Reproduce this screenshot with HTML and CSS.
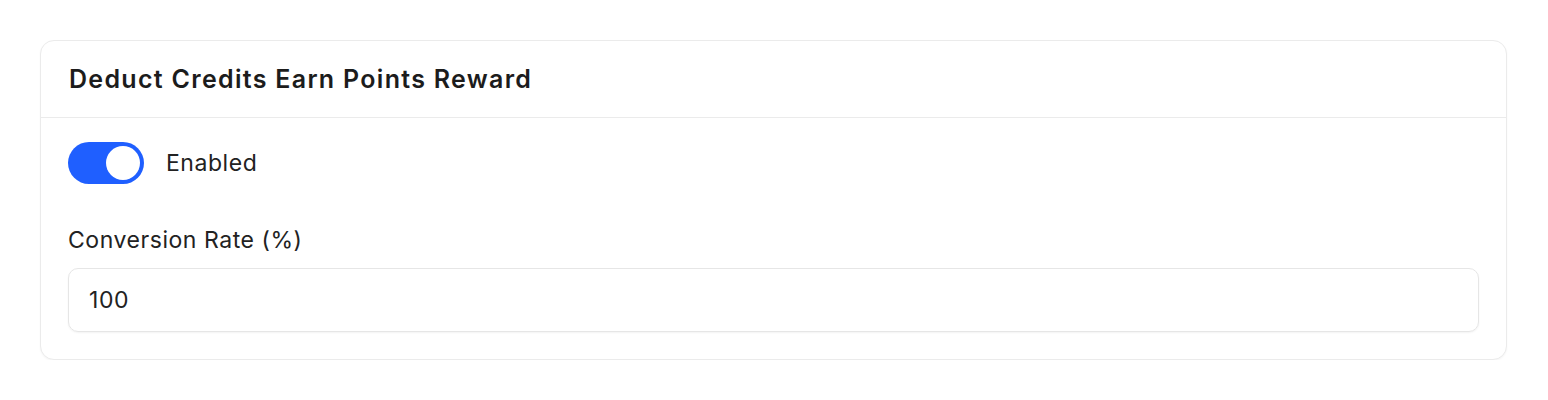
FILE: index.html
```html
<!DOCTYPE html>
<html>
<head>
<meta charset="utf-8">
<link rel="stylesheet" href="styles.css">
</head>
<body>
<div class="card">
  <div class="card-header">
    <h2 class="card-title">Deduct Credits Earn Points Reward</h2>
  </div>
  <div class="card-body">
    <div class="toggle-row">
      <span class="toggle"><span class="knob"></span></span>
      <span class="toggle-label">Enabled</span>
    </div>
    <div class="field">
      <label class="field-label">Conversion Rate (%)</label>
      <div class="input">100</div>
    </div>
  </div>
</div>
</body>
</html>
```
FILE: styles.css
```css
html, body {
  margin: 0;
  padding: 0;
  background: #ffffff;
}
body {
  padding: 40px 41px 0 40px;
  font-family: Inter, "Noto Sans", sans-serif;
  color: #1f1f1f;
}
.card {
  border: 1.5px solid #ebebeb;
  border-radius: 14px;
  background: #fff;
  box-shadow: 0 1px 2px rgba(0,0,0,0.04);
}
.card-header {
  height: 76px;
  border-bottom: 1.5px solid #ebebeb;
  display: flex;
  align-items: center;
  padding: 0 28px;
}
.card-title {
  margin: 0;
  font-size: 25px;
  font-weight: 600;
  color: #1c1c1c;
  letter-spacing: 1.3px;
  line-height: 30px;
}
.card-body {
  padding: 24px 27px 27px 27px;
}
.toggle-row {
  display: flex;
  align-items: center;
  gap: 22px;
}
.toggle {
  width: 76px;
  height: 42px;
  border-radius: 21px;
  background: #1f5fff;
  display: flex;
  align-items: center;
  justify-content: flex-end;
  padding: 0 4px;
  box-sizing: border-box;
}
.knob {
  width: 34px;
  height: 34px;
  border-radius: 50%;
  background: #fff;
}
.toggle-label {
  font-size: 23px;
  letter-spacing: 0.55px;
  color: #222;
  line-height: 28px;
}
.field {
  margin-top: 42px;
}
.field-label {
  display: block;
  font-size: 23px;
  letter-spacing: 0.55px;
  line-height: 28px;
  color: #222;
  margin-bottom: 14px;
}
.input {
  height: 64px;
  box-sizing: border-box;
  border: 1.5px solid #e6e6e6;
  border-radius: 10px;
  display: flex;
  align-items: center;
  padding: 0 20px;
  font-size: 23px;
  letter-spacing: 0.6px;
  color: #222;
  box-shadow: 0 1px 2px rgba(0,0,0,0.05);
}
```
